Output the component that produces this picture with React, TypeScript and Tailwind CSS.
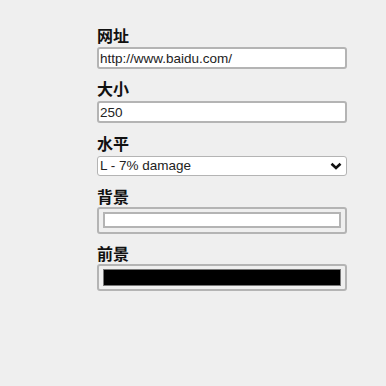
export default function App() {
  const label = "block h-5 text-[16px] leading-5 font-bold text-[#111] [font-family:'Noto_Sans_CJK_SC',sans-serif]"
  const box =
    "block w-[250px] rounded-[3px] border-2 border-[#b4b4b4] bg-white text-[13.5px] text-[#222] [font-family:'Liberation_Sans',Arial,sans-serif] outline-none"

  return (
    <div className="min-h-[386px] w-[386px] bg-[#efefef]">
      <div className="ml-[97px] flex flex-col pt-[25px]">
        <div>
          <label className={label}>网址</label>
          <input className={`${box} mt-[2px] h-[22px] px-[1px]`} defaultValue="http://www.baidu.com/" />
        </div>

        <div className="mt-[9px]">
          <label className={label}>大小</label>
          <input className={`${box} mt-[3px] h-[22px] px-[1px]`} defaultValue="250" />
        </div>

        <div className="mt-[10px]">
          <label className={label}>水平</label>
          <div className="relative mt-[3px] w-[250px]">
            <select
              className={`${box} h-[20px] appearance-none border-[1.5px] py-0 pl-[2px] leading-4`}
              defaultValue="L"
            >
              <option value="L">L - 7% damage</option>
              <option value="M">M - 15% damage</option>
              <option value="Q">Q - 25% damage</option>
              <option value="H">H - 30% damage</option>
            </select>
            <svg
              className="pointer-events-none absolute right-[5px] top-[6px]"
              width="12"
              height="8"
              viewBox="0 0 12 8"
            >
              <path d="M1.5 1.8 L6 6 L10.5 1.8" fill="none" stroke="#111" strokeWidth="2.6" />
            </svg>
          </div>
        </div>

        <div className="mt-[10px]">
          <label className={label}>背景</label>
          <div className="mt-[1px] h-[27px] w-[250px] rounded-[3px] border-2 border-[#b4b4b4] bg-[#efefef] px-[4px] pt-[3px] pb-[4px]">
            <div className="h-full w-full border-2 border-[#b4b4b4] bg-white" />
          </div>
        </div>

        <div className="mt-[9px]">
          <label className={label}>前景</label>
          <div className="mt-[1px] h-[27px] w-[250px] rounded-[3px] border-2 border-[#b4b4b4] bg-[#efefef] px-[4px] pt-[3px] pb-[3px]">
            <div className="h-full w-full border border-[#777] bg-black" />
          </div>
        </div>
      </div>
    </div>
  )
}
